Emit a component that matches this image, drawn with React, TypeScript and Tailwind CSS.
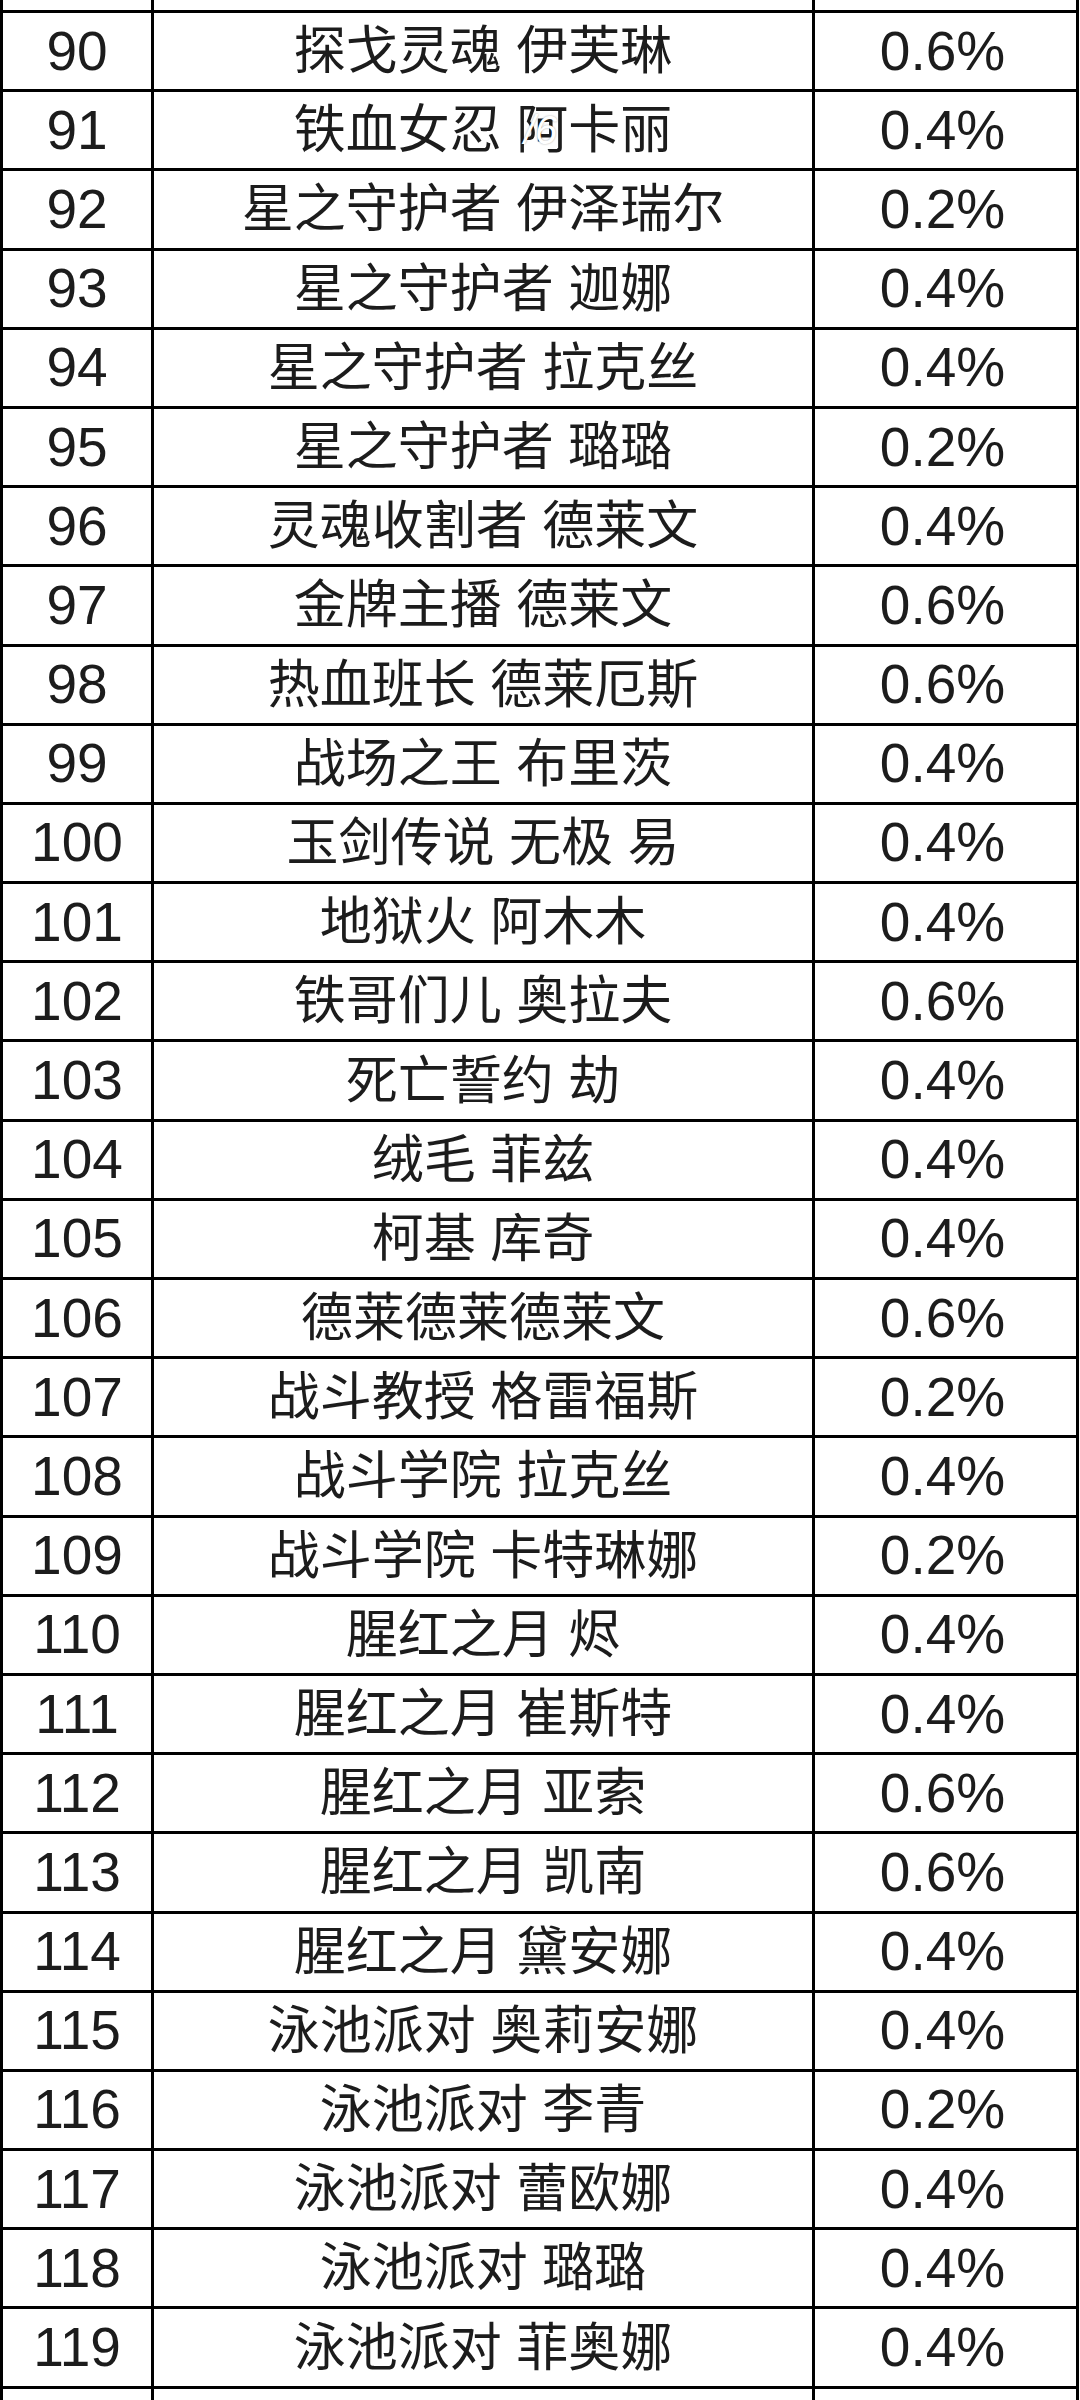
const rows: [number, string, string][] = [
  [90, "探戈灵魂 伊芙琳", "0.6%"],
  [91, "铁血女忍 阿卡丽", "0.4%"],
  [92, "星之守护者 伊泽瑞尔", "0.2%"],
  [93, "星之守护者 迦娜", "0.4%"],
  [94, "星之守护者 拉克丝", "0.4%"],
  [95, "星之守护者 璐璐", "0.2%"],
  [96, "灵魂收割者 德莱文", "0.4%"],
  [97, "金牌主播 德莱文", "0.6%"],
  [98, "热血班长 德莱厄斯", "0.6%"],
  [99, "战场之王 布里茨", "0.4%"],
  [100, "玉剑传说 无极 易", "0.4%"],
  [101, "地狱火 阿木木", "0.4%"],
  [102, "铁哥们儿 奥拉夫", "0.6%"],
  [103, "死亡誓约 劫", "0.4%"],
  [104, "绒毛 菲兹", "0.4%"],
  [105, "柯基 库奇", "0.4%"],
  [106, "德莱德莱德莱文", "0.6%"],
  [107, "战斗教授 格雷福斯", "0.2%"],
  [108, "战斗学院 拉克丝", "0.4%"],
  [109, "战斗学院 卡特琳娜", "0.2%"],
  [110, "腥红之月 烬", "0.4%"],
  [111, "腥红之月 崔斯特", "0.4%"],
  [112, "腥红之月 亚索", "0.6%"],
  [113, "腥红之月 凯南", "0.6%"],
  [114, "腥红之月 黛安娜", "0.4%"],
  [115, "泳池派对 奥莉安娜", "0.4%"],
  [116, "泳池派对 李青", "0.2%"],
  [117, "泳池派对 蕾欧娜", "0.4%"],
  [118, "泳池派对 璐璐", "0.4%"],
  [119, "泳池派对 菲奥娜", "0.4%"],
];

const Row = ({ id, name, rate }: { id: number; name: string; rate: string }) => (
  <div className="flex h-[79.2px] border-b-[3px] border-black">
    <div className="w-[151px] border-r-[3px] border-black flex items-center justify-center text-[55px]">
      {id}
    </div>
    <div className="relative w-[661px] border-r-[3px] border-black flex items-center justify-center text-[52px]">
      {name}
      {id === 91 && (
        <span className="absolute left-[370px] top-[18px] text-[40px] text-white italic [text-shadow:0_0_2px_rgba(0,0,0,0.35)]">
          /6
        </span>
      )}
    </div>
    <div className="w-[255px] flex items-center justify-center text-[55px]">{rate}</div>
  </div>
);

export default function App() {
  return (
    <div className="w-[1080px] h-[2400px] overflow-hidden bg-white text-[#1c1c1c] font-['Liberation_Sans','Noto_Sans_CJK_SC',sans-serif] leading-none">
      <div className="w-[1079px] border-x-[3px] border-black">
        {/* cut-off row above */}
        <div className="flex h-[13px] border-b-[3px] border-black">
          <div className="w-[151px] border-r-[3px] border-black" />
          <div className="w-[661px] border-r-[3px] border-black" />
          <div className="w-[255px]" />
        </div>
        {rows.map(([id, name, rate]) => (
          <Row key={id} id={id} name={name} rate={rate} />
        ))}
        {/* cut-off row below */}
        <div className="flex h-[20px]">
          <div className="w-[151px] border-r-[3px] border-black" />
          <div className="w-[661px] border-r-[3px] border-black" />
          <div className="w-[255px]" />
        </div>
      </div>
    </div>
  );
}
